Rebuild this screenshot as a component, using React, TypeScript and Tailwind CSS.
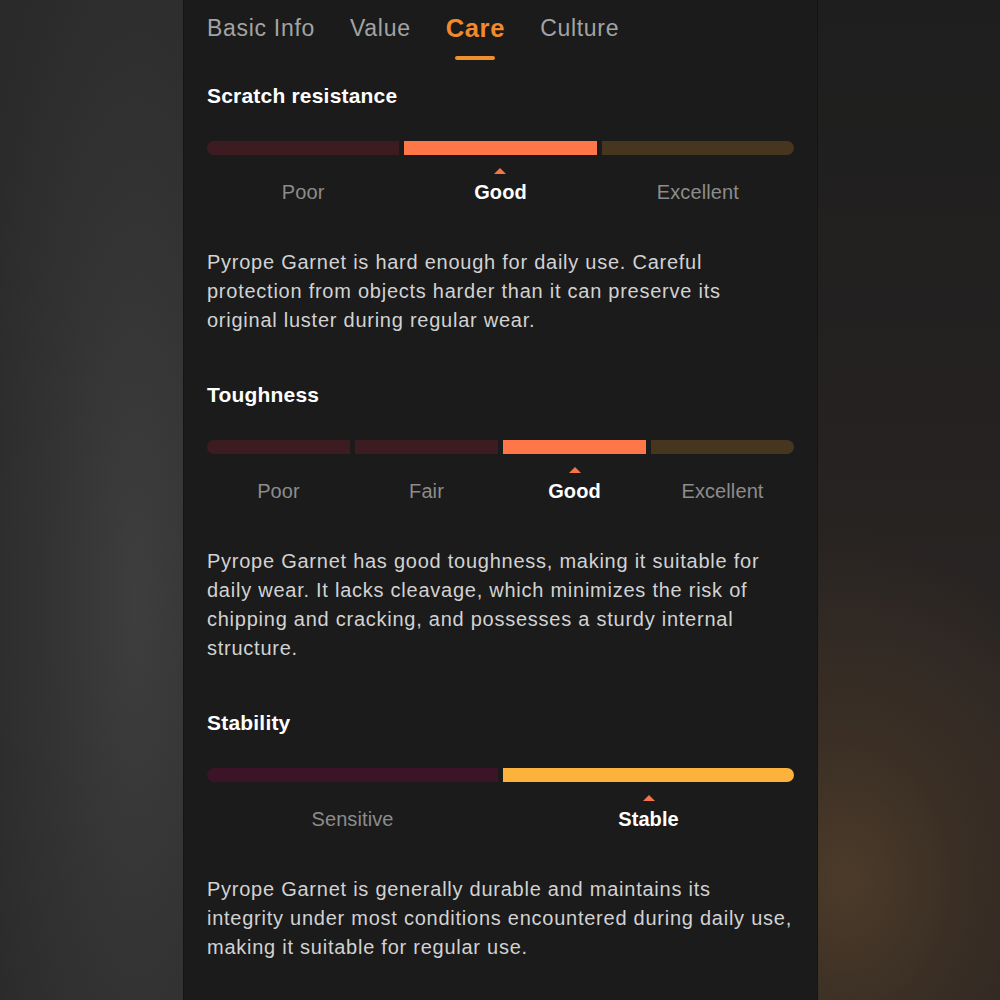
import React from 'react';

interface Scale {
  title: string;
  levels: string[];
  colors: string[];
  active: number;
  text: string;
}

const scales: Scale[] = [
  {
    title: 'Scratch resistance',
    levels: ['Poor', 'Good', 'Excellent'],
    colors: ['bg-[#3d1c21]', 'bg-[#ff7749]', 'bg-[#463620]'],
    active: 1,
    text: 'Pyrope Garnet is hard enough for daily use. Careful protection from objects harder than it can preserve its original luster during regular wear.',
  },
  {
    title: 'Toughness',
    levels: ['Poor', 'Fair', 'Good', 'Excellent'],
    colors: ['bg-[#3d1c21]', 'bg-[#3d1c21]', 'bg-[#ff7749]', 'bg-[#463620]'],
    active: 2,
    text: 'Pyrope Garnet has good toughness, making it suitable for daily wear. It lacks cleavage, which minimizes the risk of chipping and cracking, and possesses a sturdy internal structure.',
  },
  {
    title: 'Stability',
    levels: ['Sensitive', 'Stable'],
    colors: ['bg-[#3b1527]', 'bg-[#fcb23b]'],
    active: 1,
    text: 'Pyrope Garnet is generally durable and maintains its integrity under most conditions encountered during daily use, making it suitable for regular use.',
  },
];

const tabs = ['Basic Info', 'Value', 'Care', 'Culture'];

const gridCols: Record<number, string> = {
  2: 'grid-cols-2',
  3: 'grid-cols-3',
  4: 'grid-cols-4',
};

const ScaleBlock: React.FC<{ scale: Scale }> = ({ scale }) => {
  const n = scale.levels.length;
  return (
    <section className="mb-[48px]">
      <h2 className="text-[21px] leading-[24px] font-bold tracking-[0.2px] text-white">{scale.title}</h2>

      <div className={`mt-[33px] grid ${gridCols[n]} gap-[5px]`}>
        {scale.colors.map((c, i) => (
          <div
            key={i}
            className={`h-[14px] ${c} ${i === 0 ? 'rounded-l-full' : ''} ${i === n - 1 ? 'rounded-r-full' : ''}`}
          />
        ))}
      </div>

      <div className={`grid ${gridCols[n]} gap-[5px]`}>
        {scale.levels.map((label, i) => (
          <div key={label} className="flex flex-col items-center">
            <div className="h-[13px]" />
            <div
              className={`w-0 h-0 border-l-[6px] border-r-[6px] border-b-[6px] border-l-transparent border-r-transparent ${
                i === scale.active ? 'border-b-[#f2764a]' : 'border-b-transparent'
              }`}
            />
            <div
              className={`mt-[7px] text-[20px] leading-[22px] tracking-[0.1px] ${
                i === scale.active ? 'text-white font-bold' : 'text-[#8c8c8c]'
              }`}
            >
              {label}
            </div>
          </div>
        ))}
      </div>

      <p className="mt-[45px] pr-[1px] text-[20px] leading-[29px] tracking-[0.75px] text-[#d2d2d2]">
        {scale.text}
      </p>
    </section>
  );
};

export default function App() {
  return (
    <div
      className="w-full h-[1000px] flex overflow-hidden bg-[#1e1e1e]"
      style={{ fontFamily: '"Liberation Sans", Arial, sans-serif' }}
    >
      <div className="w-[183px] h-full bg-[radial-gradient(ellipse_at_75%_60%,#3e3e3e_0%,#333333_45%,#2a2a2a_90%)]" />
      <div className="w-[1px] h-full bg-[#151515]" />

      <main className="w-[633px] h-full bg-[#1b1b1b] px-[23px]">
        <nav className="flex gap-[35px] pt-[14px]">
          {tabs.map((t) => (
            <div key={t} className="flex flex-col items-center">
              <span
                className={`leading-[28px] tracking-[0.7px] ${
                  t === 'Care' ? 'text-[25.5px] text-[#f08a2c] font-bold' : 'text-[23px] text-[#a3a3a3]'
                }`}
              >
                {t}
              </span>
              <span
                className={`mt-[14px] h-[4px] w-[40px] rounded-full ${
                  t === 'Care' ? 'bg-[#f0902c]' : 'bg-transparent'
                }`}
              />
            </div>
          ))}
        </nav>

        <div className="pt-[24px]">
          {scales.map((s) => (
            <ScaleBlock key={s.title} scale={s} />
          ))}
        </div>
      </main>

      <div className="w-[1px] h-full bg-[#151515]" />
      <div className="flex-1 h-full bg-[radial-gradient(ellipse_150%_35%_at_15%_88%,#4c3b29_0%,#3b2f25_40%,rgba(32,31,30,0)_100%),linear-gradient(180deg,#1e1e1e_0%,#252221_45%,#2b2624_75%,#262321_100%)]" />
    </div>
  );
}
